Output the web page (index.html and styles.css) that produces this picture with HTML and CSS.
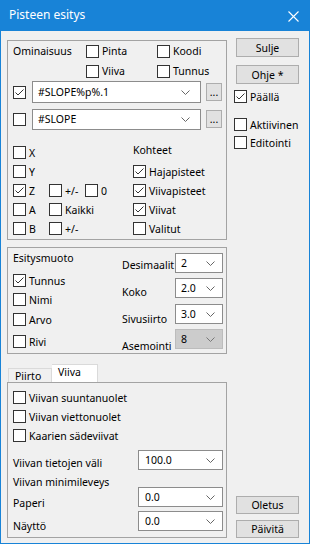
FILE: index.html
```html
<!DOCTYPE html>
<html>
<head>
<meta charset="utf-8">
<link rel="stylesheet" href="styles.css">
</head>
<body>
<div class="window">
  <div class="titlebar">
    <span class="title">Pisteen esitys</span>
    <svg class="close" width="11" height="11" viewBox="0 0 11 11"><path d="M0.5 0.5L10.5 10.5M10.5 0.5L0.5 10.5" stroke="#fff" stroke-width="1.1" fill="none"/></svg>
  </div>
  <div class="client">
    <div class="left">
      <div class="group g1">
        <div class="optrow">
          <span class="txt">Ominaisuus</span>
          <span class="cb"><span class="box"></span>Pinta</span>
          <span class="cb"><span class="box"></span>Koodi</span>
        </div>
        <div class="optrow">
          <span></span>
          <span class="cb"><span class="box"></span>Viiva</span>
          <span class="cb"><span class="box"></span>Tunnus</span>
        </div>
        <div class="comborow">
          <span class="box checked"><svg width="11" height="11" viewBox="0 0 11 11"><path d="M1.5 5.5L4 8L9.5 2.5" stroke="#333" stroke-width="1" fill="none"/></svg></span>
          <span class="combo wide"><span class="val">#SLOPE%p%.1</span><svg class="chev" width="9" height="5" viewBox="0 0 9 5"><path d="M0.5 0.5L4.5 4.5L8.5 0.5" stroke="#666" fill="none"/></svg></span>
          <span class="dots">...</span>
        </div>
        <div class="comborow second">
          <span class="box"></span>
          <span class="combo wide"><span class="val">#SLOPE</span><svg class="chev" width="9" height="5" viewBox="0 0 9 5"><path d="M0.5 0.5L4.5 4.5L8.5 0.5" stroke="#666" fill="none"/></svg></span>
          <span class="dots">...</span>
        </div>
        <div class="axes">
          <span class="cb"><span class="box"></span>X</span>
          <span></span>
          <span class="txt kohteet">Kohteet</span>

          <span class="cb"><span class="box"></span>Y</span>
          <span></span>
          <span class="cb"><span class="box checked"><svg width="11" height="11" viewBox="0 0 11 11"><path d="M1.5 5.5L4 8L9.5 2.5" stroke="#333" stroke-width="1" fill="none"/></svg></span>Hajapisteet</span>

          <span class="cb"><span class="box checked"><svg width="11" height="11" viewBox="0 0 11 11"><path d="M1.5 5.5L4 8L9.5 2.5" stroke="#333" stroke-width="1" fill="none"/></svg></span>Z</span>
          <span class="pair">
            <span class="cb pm"><span class="box"></span>+/-</span>
            <span class="cb"><span class="box"></span>0</span>
          </span>
          <span class="cb"><span class="box checked"><svg width="11" height="11" viewBox="0 0 11 11"><path d="M1.5 5.5L4 8L9.5 2.5" stroke="#333" stroke-width="1" fill="none"/></svg></span>Viivapisteet</span>

          <span class="cb"><span class="box"></span>A</span>
          <span class="cb"><span class="box"></span>Kaikki</span>
          <span class="cb"><span class="box checked"><svg width="11" height="11" viewBox="0 0 11 11"><path d="M1.5 5.5L4 8L9.5 2.5" stroke="#333" stroke-width="1" fill="none"/></svg></span>Viivat</span>

          <span class="cb"><span class="box"></span>B</span>
          <span class="cb"><span class="box"></span>+/-</span>
          <span class="cb"><span class="box"></span>Valitut</span>
        </div>
      </div>

      <div class="group g2">
        <div class="g2left">
          <span class="txt esitys">Esitysmuoto</span>
          <span class="cb r-tunnus"><span class="box checked"><svg width="11" height="11" viewBox="0 0 11 11"><path d="M1.5 5.5L4 8L9.5 2.5" stroke="#333" stroke-width="1" fill="none"/></svg></span>Tunnus</span>
          <span class="cb r-nimi"><span class="box"></span>Nimi</span>
          <span class="cb r-arvo"><span class="box"></span>Arvo</span>
          <span class="cb r-rivi"><span class="box"></span>Rivi</span>
        </div>
        <div class="g2right">
          <div class="frow"><span class="flabel">Desimaalit</span><span class="combo small"><span class="val">2</span><svg class="chev" width="9" height="5" viewBox="0 0 9 5"><path d="M0.5 0.5L4.5 4.5L8.5 0.5" stroke="#666" fill="none"/></svg></span></div>
          <div class="frow"><span class="flabel l2">Koko</span><span class="combo small"><span class="val">2.0</span><svg class="chev" width="9" height="5" viewBox="0 0 9 5"><path d="M0.5 0.5L4.5 4.5L8.5 0.5" stroke="#666" fill="none"/></svg></span></div>
          <div class="frow r3"><span class="flabel l3">Sivusiirto</span><span class="combo small"><span class="val">3.0</span><svg class="chev" width="9" height="5" viewBox="0 0 9 5"><path d="M0.5 0.5L4.5 4.5L8.5 0.5" stroke="#666" fill="none"/></svg></span></div>
          <div class="frow"><span class="flabel l4">Asemointi</span><span class="combo small disabled"><span class="val">8</span><svg class="chev" width="9" height="5" viewBox="0 0 9 5"><path d="M0.5 0.5L4.5 4.5L8.5 0.5" stroke="#777" fill="none"/></svg></span></div>
        </div>
      </div>

      <div class="tabs">
        <span class="tab">Piirto</span>
        <span class="tab active">Viiva</span>
      </div>
      <div class="panel">
        <span class="cb prow"><span class="box"></span>Viivan suuntanuolet</span>
        <span class="cb prow"><span class="box"></span>Viivan viettonuolet</span>
        <span class="cb prow"><span class="box"></span>Kaarien sädeviivat</span>
        <div class="prow2 first"><span class="plabel">Viivan tietojen väli</span><span class="combo med"><span class="val">100.0</span><svg class="chev" width="9" height="5" viewBox="0 0 9 5"><path d="M0.5 0.5L4.5 4.5L8.5 0.5" stroke="#666" fill="none"/></svg></span></div>
        <span class="txt minlabel">Viivan minimileveys</span>
        <div class="prow2 paperi"><span class="plabel">Paperi</span><span class="combo med"><span class="val">0.0</span><svg class="chev" width="9" height="5" viewBox="0 0 9 5"><path d="M0.5 0.5L4.5 4.5L8.5 0.5" stroke="#666" fill="none"/></svg></span></div>
        <div class="prow2 naytto"><span class="plabel">Näyttö</span><span class="combo med"><span class="val">0.0</span><svg class="chev" width="9" height="5" viewBox="0 0 9 5"><path d="M0.5 0.5L4.5 4.5L8.5 0.5" stroke="#666" fill="none"/></svg></span></div>
      </div>
    </div>

    <div class="right">
      <span class="btn b-sulje">Sulje</span>
      <span class="btn b-ohje">Ohje *</span>
      <span class="cb rcb r-paalla"><span class="box checked"><svg width="11" height="11" viewBox="0 0 11 11"><path d="M1.5 5.5L4 8L9.5 2.5" stroke="#333" stroke-width="1" fill="none"/></svg></span>Päällä</span>
      <span class="cb rcb r-akt"><span class="box"></span>Aktiivinen</span>
      <span class="cb rcb r-edit"><span class="box"></span>Editointi</span>
      <span class="btn b-oletus">Oletus</span>
      <span class="btn b-paivita">Päivitä</span>
    </div>
  </div>
</div>
</body>
</html>
```
FILE: styles.css
```css
* { box-sizing: border-box; }
html, body { margin: 0; padding: 0; background: #f0f0f0; }
body {
  font-family: "Noto Sans", "Liberation Sans", sans-serif;
  font-size: 10.5px;
  color: #000;
}
.window {
  width: 310px;
  height: 544px;
  border: 1px solid #1883d7;
  border-top: none;
  background: #f0f0f0;
  display: flex;
  flex-direction: column;
}
.titlebar {
  height: 31px;
  margin: 0 -1px;
  background: #1883d7;
  display: flex;
  align-items: center;
  justify-content: space-between;
  padding: 0 11px 0 9px;
  color: #fff;
}
.title { font-size: 12px; line-height: 16px; padding-bottom: 1px; }
.close { display: block; margin-top: 1px; }

.client {
  flex: 1;
  display: flex;
  padding: 0 9px 5px 6px;
}
.left { width: 220px; display: flex; flex-direction: column; }
.right {
  width: 66px;
  margin-left: 7px;
  display: flex;
  flex-direction: column;
}

.txt { line-height: 16px; white-space: nowrap; }
.cb {
  display: flex;
  align-items: center;
  height: 19px;
  white-space: nowrap;
  line-height: 16px;
}
.box {
  width: 13px;
  height: 13px;
  border: 1px solid #333;
  background: #fff;
  flex: none;
  margin-right: 3px;
  display: flex;
  align-items: center;
  justify-content: center;
}
.box svg { display: block; }

.group { border: 1px solid #a3a3a3; }
.g1 {
  margin-top: 9px;
  height: 200px;
  padding: 0 0 0 5px;
}
.optrow {
  display: grid;
  grid-template-columns: 73px 71px auto;
  height: 20px;
  align-items: center;
}
.optrow .cb { height: 20px; }
.comborow {
  display: flex;
  align-items: center;
  height: 22px;
  margin-top: 0;
}
.comborow .box { margin-right: 6px; }
.comborow.second { margin-top: 5px; }
.combo {
  display: flex;
  align-items: center;
  justify-content: space-between;
  background: #fff;
  border: 1px solid #8c8c8c;
  height: 22px;
  padding: 0 10px 0 5px;
}
.combo .val { line-height: 16px; white-space: nowrap; }
.chev { display: block; flex: none; }
.combo.wide { width: 169px; }
.comborow.second .combo { height: 21px; }
.dots {
  width: 16px;
  height: 18px;
  margin-left: 5px;
  background: #e1e1e1;
  border: 1px solid #adadad;
  display: flex;
  align-items: flex-end;
  justify-content: center;
  line-height: 12px;
  padding-bottom: 2px;
  letter-spacing: 0;
}
.axes {
  margin-top: 13px;
  display: grid;
  grid-template-columns: 36px 84px auto;
  grid-auto-rows: 19px;
}
.kohteet { align-self: start; margin-top: -1px; }
.pair { display: flex; }
.pm { width: 36px; }

.g2 {
  margin-top: 7px;
  height: 107px;
  display: flex;
  padding: 0 3px 0 5px;
}
.g2left { display: flex; flex-direction: column; width: 109px; }
.esitys { margin-top: 2px; }
.r-tunnus { margin-top: 5px; }
.r-arvo { margin-top: 1px; }
.r-rivi { margin-top: 3px; }
.g2right {
  display: flex;
  flex-direction: column;
  padding-top: 5px;
  gap: 5px;
}
.frow { display: flex; height: 20px; }
.frow.r3 { margin-top: 1px; }
.flabel {
  width: 53px;
  line-height: 16px;
  align-self: flex-end;
  margin-bottom: 0;
  white-space: nowrap;
}
.flabel.l2 { margin-bottom: -2px; }
.flabel.l3 { margin-bottom: -3px; }
.flabel.l4 { margin-bottom: -5px; }
.combo.small { width: 48px; height: 20px; padding: 0 7px 0 5px; }
.combo.disabled { background: #cccccc; border-color: #bcbcbc; }

.tabs {
  margin-top: 10px;
  height: 18px;
  display: flex;
  align-items: flex-end;
  padding-left: 1px;
}
.tab {
  height: 14px;
  width: 44px;
  line-height: 14px;
  padding-left: 6px;
  border: 1px solid #dadada;
  border-bottom: none;
  background: #f0f0f0;
}
.tab.active {
  height: 18px;
  width: 46px;
  background: #fff;
  line-height: 14px;
  padding-left: 6px;
  border-left: none;
}
.panel {
  border: 1px solid #a3a3a3;
  flex: 1;
  display: flex;
  flex-direction: column;
  padding: 5px 3px 0 5px;
}
.prow2 {
  display: flex;
  height: 20px;
  justify-content: space-between;
}
.prow2.first { margin-top: 5px; }
.plabel { line-height: 16px; align-self: flex-end; margin-bottom: -1px; white-space: nowrap; }
.combo.med { width: 85px; height: 20px; padding: 0 7px 0 6px; }
.minlabel { line-height: 12px; margin-top: 6px; }
.prow2.paperi { margin-top: -1px; }
.prow2.paperi .plabel { margin-bottom: -4px; }
.prow2.naytto { margin-top: 4px; }
.prow2.naytto .plabel { margin-bottom: -3px; }

.btn {
  margin-left: 2px;
  width: 63px;
  height: 19px;
  background: #e1e1e1;
  border: 1px solid #adadad;
  display: flex;
  align-items: center;
  justify-content: center;
  line-height: 16px;
}
.b-sulje { margin-top: 7px; }
.b-ohje { margin-top: 8px; }
.r-paalla { margin-top: 3px; }
.r-akt { margin-top: 9px; }
.r-edit { margin-top: -1px; }
.b-oletus { margin-top: auto; height: 18px; }
.b-paivita { margin-top: 6px; height: 18px; }
```
